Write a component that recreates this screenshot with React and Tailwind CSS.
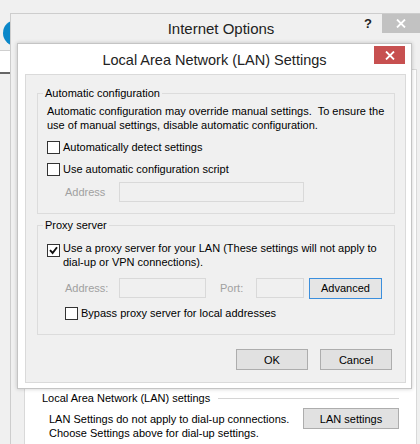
import React from "react";

const CheckBox = ({ checked }) => (
  <span className="w-[13px] h-[13px] shrink-0 border border-[#333333] bg-white flex items-center justify-center">
    {checked && (
      <svg width="9" height="9" viewBox="0 0 9 9">
        <path d="M1 4.2 L3.6 7 L8 1.2" stroke="#111" strokeWidth="1.9" fill="none" />
      </svg>
    )}
  </span>
);

const WinButton = ({ children, className = "", focused }) => (
  <button
    className={
      "h-[21px] flex items-center justify-center text-[#000] " +
      (focused ? "border border-[#3c8fdd] bg-[#e5e5e5] " : "border border-[#adadad] bg-[#e1e1e1] ") +
      className
    }
  >
    {children}
  </button>
);

const GroupBox = ({ label, children, className = "" }) => (
  <fieldset className={"w-[358px] border border-[#dcdcdc] " + className}>
    <legend className="ml-[5px] px-[2px] leading-[14px]">{label}</legend>
    <div className="pl-[9px]">{children}</div>
  </fieldset>
);

const CloseGlyph = () => (
  <svg width="10" height="9" viewBox="0 0 10 9">
    <path d="M1 0.5 L9 8.5 M9 0.5 L1 8.5" stroke="#fff" strokeWidth="1.8" />
  </svg>
);

export default function App() {
  return (
    <div className="relative w-[420px] h-[444px] overflow-hidden bg-[#f0f0f0] text-[11px] leading-[14px] text-[#000] font-['Liberation_Sans',Arial,sans-serif]">
      {/* browser behind */}
      <div className="absolute left-[3px] top-[20px] w-[26px] h-[26px] rounded-full bg-[#0a87c9]" />
      <div className="absolute left-0 top-[50px] w-[14px] h-[24px] bg-white border-t border-[#cfcfcf] border-b-2 border-b-[#666]" />

      {/* Internet Options window */}
      <div className="absolute left-[10px] top-[13px] w-[421px] h-[440px] bg-[#f0f0f0] border-l border-t border-[#cdcdcd]">
        <div className="relative h-[27px] flex items-center justify-center">
          <span className="text-[15px] text-[#222] pt-[2px]">Internet Options</span>
          <span className="absolute left-[353px] top-[3px] text-[13px] font-bold text-[#222]">?</span>
          <span className="absolute left-[371px] top-0 w-[38px] h-[19px] bg-[#c2c2c2] flex items-center justify-center">
            <CloseGlyph />
          </span>
        </div>
        <div className="ml-[13px] mt-[28px] w-[393px] h-[400px] bg-white border border-[#d9d9d9] pt-[321px]">
          <div className="flex items-center pl-[17px] pr-[17px] h-[14px]">
            <span>Local Area Network (LAN) settings</span>
            <div className="flex-1 h-px bg-[#d5d5d5] ml-[8px]" />
          </div>
          <div className="flex mt-[3px] pl-[24px] pr-[17px]">
            <div className="mt-[4px]">
              <div>LAN Settings do not apply to dial-up connections.</div>
              <div>Choose Settings above for dial-up settings.</div>
            </div>
            <WinButton className="ml-auto w-[96px]">LAN settings</WinButton>
          </div>
        </div>
      </div>

      {/* LAN Settings dialog */}
      <div className="absolute left-[17px] top-[43px] w-[395px] h-[346px] bg-white border border-[#c4c4c4] shadow-[0_0_4px_rgba(0,0,0,0.2)]">
        <div className="relative h-[30px] flex items-center justify-center">
          <span className="text-[14.5px] text-[#222] pt-[2px]">Local Area Network (LAN) Settings</span>
          <span className="absolute left-[356px] top-[2px] w-[31px] h-[18px] bg-[#c75050] flex items-center justify-center">
            <CloseGlyph />
          </span>
        </div>
        <div className="ml-[7px] w-[381px] h-[309px] bg-[#f0f0f0] border border-[#dadada] pl-[11px] pt-[11px]">
          <GroupBox label="Automatic configuration" className="pb-[11px]">
            <p className="mt-[4px]">
              Automatic configuration may override manual settings.&nbsp; To ensure the
              <br />
              use of manual settings, disable automatic configuration.
            </p>
            <div className="mt-[8px] h-[14px] flex items-center">
              <CheckBox />
              <span className="ml-[3px]">Automatically detect settings</span>
            </div>
            <div className="mt-[8px] h-[14px] flex items-center">
              <CheckBox />
              <span className="ml-[3px]">Use automatic configuration script</span>
            </div>
            <div className="mt-[6px] h-[20px] flex items-center pl-[18px]">
              <span className="w-[54px] text-[#a0a0a0]">Address</span>
              <div className="w-[185px] h-[20px] border border-[#d9d9d9] bg-[#f0f0f0]" />
            </div>
          </GroupBox>

          <GroupBox label="Proxy server" className="mt-[4px] pb-[14px]">
            <div className="mt-[9px] flex items-start">
              <span className="mt-[3px]">
                <CheckBox checked />
              </span>
              <span className="ml-[3px] whitespace-nowrap">
                Use a proxy server for your LAN (These settings will not apply to
                <br />
                dial-up or VPN connections).
              </span>
            </div>
            <div className="mt-[9px] h-[20px] flex items-center pl-[18px]">
              <span className="w-[54px] text-[#a0a0a0]">Address:</span>
              <div className="w-[87px] h-[20px] border border-[#d9d9d9] bg-[#f0f0f0]" />
              <span className="ml-[14px] w-[36px] text-[#a0a0a0]">Port:</span>
              <div className="w-[48px] h-[20px] border border-[#d9d9d9] bg-[#f0f0f0]" />
              <WinButton focused className="ml-[5px] w-[73px] h-[20px]">Advanced</WinButton>
            </div>
            <div className="mt-[8px] h-[14px] flex items-center pl-[18px]">
              <CheckBox />
              <span className="ml-[3px]">Bypass proxy server for local addresses</span>
            </div>
          </GroupBox>

          <div className="mt-[14px] flex justify-end gap-[12px] pr-[13px]">
            <WinButton className="w-[72px]">OK</WinButton>
            <WinButton className="w-[72px]">Cancel</WinButton>
          </div>
        </div>
      </div>
    </div>
  );
}
